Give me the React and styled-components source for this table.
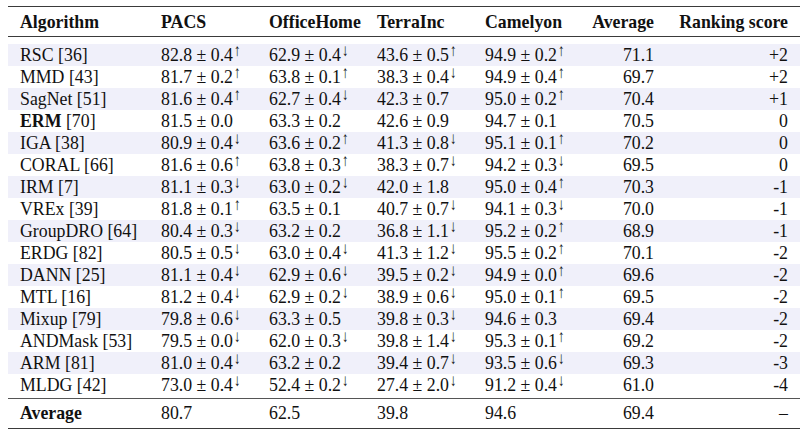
import { styled, createGlobalStyle } from 'styled-components'

const GlobalStyle = createGlobalStyle`
  body {
    margin: 0;
    background: #fff;
    font-family: "Liberation Serif", "Times New Roman", serif;
    color: #111;
  }
`

const rows = [
  ['RSC', '36', ['82.8', '0.4', 'u'], ['62.9', '0.4', 'd'], ['43.6', '0.5', 'u'], ['94.9', '0.2', 'u'], '71.1', '+2'],
  ['MMD', '43', ['81.7', '0.2', 'u'], ['63.8', '0.1', 'u'], ['38.3', '0.4', 'd'], ['94.9', '0.4', 'u'], '69.7', '+2'],
  ['SagNet', '51', ['81.6', '0.4', 'u'], ['62.7', '0.4', 'd'], ['42.3', '0.7'], ['95.0', '0.2', 'u'], '70.4', '+1'],
  ['ERM', '70', ['81.5', '0.0'], ['63.3', '0.2'], ['42.6', '0.9'], ['94.7', '0.1'], '70.5', '0', true],
  ['IGA', '38', ['80.9', '0.4', 'd'], ['63.6', '0.2', 'u'], ['41.3', '0.8', 'd'], ['95.1', '0.1', 'u'], '70.2', '0'],
  ['CORAL', '66', ['81.6', '0.6', 'u'], ['63.8', '0.3', 'u'], ['38.3', '0.7', 'd'], ['94.2', '0.3', 'd'], '69.5', '0'],
  ['IRM', '7', ['81.1', '0.3', 'd'], ['63.0', '0.2', 'd'], ['42.0', '1.8'], ['95.0', '0.4', 'u'], '70.3', '-1'],
  ['VREx', '39', ['81.8', '0.1', 'u'], ['63.5', '0.1'], ['40.7', '0.7', 'd'], ['94.1', '0.3', 'd'], '70.0', '-1'],
  ['GroupDRO', '64', ['80.4', '0.3', 'd'], ['63.2', '0.2'], ['36.8', '1.1', 'd'], ['95.2', '0.2', 'u'], '68.9', '-1'],
  ['ERDG', '82', ['80.5', '0.5', 'd'], ['63.0', '0.4', 'd'], ['41.3', '1.2', 'd'], ['95.5', '0.2', 'u'], '70.1', '-2'],
  ['DANN', '25', ['81.1', '0.4', 'd'], ['62.9', '0.6', 'd'], ['39.5', '0.2', 'd'], ['94.9', '0.0', 'u'], '69.6', '-2'],
  ['MTL', '16', ['81.2', '0.4', 'd'], ['62.9', '0.2', 'd'], ['38.9', '0.6', 'd'], ['95.0', '0.1', 'u'], '69.5', '-2'],
  ['Mixup', '79', ['79.8', '0.6', 'd'], ['63.3', '0.5'], ['39.8', '0.3', 'd'], ['94.6', '0.3'], '69.4', '-2'],
  ['ANDMask', '53', ['79.5', '0.0', 'd'], ['62.0', '0.3', 'd'], ['39.8', '1.4', 'd'], ['95.3', '0.1', 'u'], '69.2', '-2'],
  ['ARM', '81', ['81.0', '0.4', 'd'], ['63.2', '0.2'], ['39.4', '0.7', 'd'], ['93.5', '0.6', 'd'], '69.3', '-3'],
  ['MLDG', '42', ['73.0', '0.4', 'd'], ['52.4', '0.2', 'd'], ['27.4', '2.0', 'd'], ['91.2', '0.4', 'd'], '61.0', '-4'],
]

const Table = styled.div`
  width: 792px;
  margin: 6px 0 0 8px;
  font-size: 17.8px;
`

const Row = styled.div`
  display: grid;
  grid-template-columns: 141px 108px 108px 108px 107px 86px 134px;
  align-items: center;
  height: ${p => p.$h || 22}px;
  background: ${p => (p.$shade ? '#f0f0fa' : 'transparent')};
  white-space: nowrap;
`

const Head = styled(Row)`
  border-top: 1.5px solid #3a3a3a;
  border-bottom: 1px solid #3a3a3a;
  font-weight: bold;
  margin-bottom: 6.5px;
`

const Foot = styled(Row)`
  margin-top: 2px;
  border-top: 1px solid #555;
  border-bottom: 1.5px solid #3a3a3a;
  box-sizing: border-box;
`

const Cell = styled.div`
  padding: ${p => (p.$right ? '0 12px 0 0' : '0 0 0 12px')};
  text-align: ${p => (p.$right ? 'right' : 'left')};
  line-height: 22px;
`

const Mark = styled.sup`
  display: inline-block;
  font-size: 17px;
  line-height: 0;
  vertical-align: 5px;
  margin-left: 0;
  transform: scaleX(0.8);
`

function Score({ v }) {
  const [mean, std, dir] = v
  return (
    <Cell>
      {mean} ± {std}
      {dir && <Mark>{dir === 'u' ? '↑' : '↓'}</Mark>}
    </Cell>
  )
}

export default function App() {
  return (
    <>
      <GlobalStyle />
      <Table>
        <Head $h={29}>
          <Cell>Algorithm</Cell>
          <Cell>PACS</Cell>
          <Cell>OfficeHome</Cell>
          <Cell>TerraInc</Cell>
          <Cell>Camelyon</Cell>
          <Cell $right>Average</Cell>
          <Cell $right>Ranking score</Cell>
        </Head>
        {rows.map((r, i) => (
          <Row key={r[0]} $shade={i % 2 === 0}>
            <Cell>
              {r[8] ? <b>{r[0]}</b> : r[0]} [{r[1]}]
            </Cell>
            <Score v={r[2]} />
            <Score v={r[3]} />
            <Score v={r[4]} />
            <Score v={r[5]} />
            <Cell $right>{r[6]}</Cell>
            <Cell $right>{r[7]}</Cell>
          </Row>
        ))}
        <Foot $h={31}>
          <Cell><b>Average</b></Cell>
          <Cell>80.7</Cell>
          <Cell>62.5</Cell>
          <Cell>39.8</Cell>
          <Cell>94.6</Cell>
          <Cell $right>69.4</Cell>
          <Cell $right>–</Cell>
        </Foot>
      </Table>
    </>
  )
}
